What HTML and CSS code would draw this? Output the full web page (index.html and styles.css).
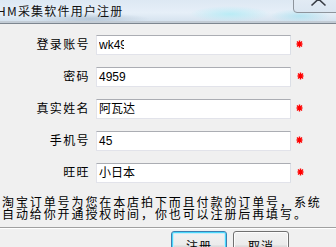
FILE: index.html
```html
<!DOCTYPE html>
<html>
<head>
<meta charset="utf-8">
<link rel="stylesheet" href="styles.css">
</head>
<body>
<div class="window">
  <div class="titlebar">
    <span class="title">HM采集软件用户注册</span>
    <span class="close">
      <svg width="53" height="23" viewBox="0 0 53 23"><path d="M18.5 2.5 L32.5 15.5 M32.5 2.5 L18.5 15.5" stroke="#3a3f47" stroke-width="1.6" fill="none"/></svg>
    </span>
  </div>
  <div class="form">
    <div class="row">
      <span class="label">登录账号</span>
      <span class="box"><span class="clip">wk49</span></span>
      <svg class="star" width="7" height="8" viewBox="0 0 7 8"><path d="M3.5 0.5 V7.5 M0.5 4 H6.5 M1 1.5 L6 6.5 M6 1.5 L1 6.5" stroke="#ff0000" stroke-width="1.4" fill="none"/></svg>
    </div>
    <div class="row">
      <span class="label">密码</span>
      <span class="box">4959</span>
      <svg class="star s2" width="7" height="8" viewBox="0 0 7 8"><path d="M3.5 0.5 V7.5 M0.5 4 H6.5 M1 1.5 L6 6.5 M6 1.5 L1 6.5" stroke="#ff0000" stroke-width="1.4" fill="none"/></svg>
    </div>
    <div class="row">
      <span class="label">真实姓名</span>
      <span class="box">阿瓦达</span>
      <svg class="star" width="7" height="8" viewBox="0 0 7 8"><path d="M3.5 0.5 V7.5 M0.5 4 H6.5 M1 1.5 L6 6.5 M6 1.5 L1 6.5" stroke="#ff0000" stroke-width="1.4" fill="none"/></svg>
    </div>
    <div class="row">
      <span class="label">手机号</span>
      <span class="box">45</span>
      <svg class="star" width="7" height="8" viewBox="0 0 7 8"><path d="M3.5 0.5 V7.5 M0.5 4 H6.5 M1 1.5 L6 6.5 M6 1.5 L1 6.5" stroke="#ff0000" stroke-width="1.4" fill="none"/></svg>
    </div>
    <div class="row">
      <span class="label">旺旺</span>
      <span class="box">小日本</span>
      <svg class="star s2" width="7" height="8" viewBox="0 0 7 8"><path d="M3.5 0.5 V7.5 M0.5 4 H6.5 M1 1.5 L6 6.5 M6 1.5 L1 6.5" stroke="#ff0000" stroke-width="1.4" fill="none"/></svg>
    </div>
  </div>
  <p class="note">淘宝订单号为您在本店拍下而且付款的订单号，系统<br>自动给你开通授权时间，你也可以注册后再填写。</p>
  <div class="sep"></div>
  <div class="buttons">
    <span class="btn focus">注册</span>
    <span class="btn">取消</span>
  </div>
</div>
</body>
</html>
```

FILE: styles.css
```css
html, body {
  margin: 0;
  padding: 0;
  overflow: hidden;
  width: 336px;
  height: 247px;
}
body {
  background: #f0f0f0;
  font-family: "Noto Sans CJK SC", "Liberation Sans", sans-serif;
  font-size: 12px;
  color: #000;
}
.window {
  width: 336px;
  height: 247px;
  overflow: hidden;
}
.titlebar {
  height: 21px;
  display: flex;
  align-items: flex-start;
  overflow: hidden;
  background:
    radial-gradient(ellipse 40px 8px at 230px 14px, rgba(175, 235, 245, 0.8), rgba(175, 235, 245, 0) 100%),
    radial-gradient(ellipse 30px 7px at 300px 16px, rgba(165, 225, 240, 0.7), rgba(165, 225, 240, 0) 100%),
    radial-gradient(ellipse 60px 6px at 90px 19px, rgba(150, 170, 190, 0.5), rgba(150, 170, 190, 0) 100%),
    linear-gradient(to bottom, #dde8f3 0%, #e6eff8 60%, #d6e3ef 100%);
  border-bottom: 2px solid #c3ccd5;
  box-shadow: 0 1px 0 #7d8690;
  margin-bottom: 1px;
}
.title {
  line-height: 22px;
  margin-left: -3px;
  letter-spacing: 1.2px;
  white-space: nowrap;
  color: #111;
}
.close {
  margin-left: auto;
  margin-right: -10px;
  margin-top: -10px;
  width: 53px;
  height: 23px;
  flex-shrink: 0;
  box-sizing: border-box;
  border: 1px solid #8d949c;
  border-radius: 0 0 0 4px;
  background: linear-gradient(to bottom, #e6eef6, #dbe6f1);
  display: block;
}
.close svg {
  display: block;
  margin: -1px;
}
.form {
  padding-top: 11px;
  display: flex;
  flex-direction: column;
  gap: 12px;
}
.row {
  display: flex;
  align-items: center;
  height: 20px;
}
.label {
  width: 90px;
  margin-right: 6px;
  text-align: right;
  letter-spacing: 1.4px;
  white-space: nowrap;
  margin-top: -3px;
}
.box {
  width: 195px;
  height: 20px;
  box-sizing: border-box;
  background: #fff;
  border: 1px solid #e2e3ea;
  border-top-color: #abadb3;
  border-right-color: #dbdfe6;
  padding-left: 2px;
  font-size: 12px;
  line-height: 18px;
  white-space: nowrap;
  overflow: hidden;
}
.clip {
  display: inline-block;
  width: 25px;
  overflow: hidden;
  vertical-align: top;
  font-family: "Liberation Sans", sans-serif;
}
.box {
  font-family: "Liberation Sans", "Noto Sans CJK SC", sans-serif;
}
.star {
  margin-left: 5px;
  margin-top: -2px;
  display: block;
}
.star.s2 {
  margin-left: 6px;
}
.note {
  margin: 13px 0 0 2px;
  line-height: 12px;
  letter-spacing: 1.9px;
  white-space: nowrap;
}
.sep {
  margin-top: 7px;
  height: 0;
  border-top: 1px solid #a0a0a0;
  border-bottom: 1px solid #ffffff;
}
.buttons {
  display: flex;
  gap: 6px;
  padding-left: 171px;
  margin-top: 2px;
}
.btn {
  width: 56px;
  height: 30px;
  box-sizing: border-box;
  border: 1px solid #707070;
  border-radius: 3px;
  background: linear-gradient(to bottom, #f2f2f2 0%, #ebebeb 45%, #dddddd 50%, #cfcfcf 100%);
  box-shadow: inset 0 0 0 1px #fcfcfc;
  text-align: center;
  line-height: 28px;
  letter-spacing: 1px;
}
.btn.focus {
  border-color: #3c7fb1;
  box-shadow: inset 0 0 0 1px #48d8fb, inset 0 0 0 2px #c8ecfa;
}
```
